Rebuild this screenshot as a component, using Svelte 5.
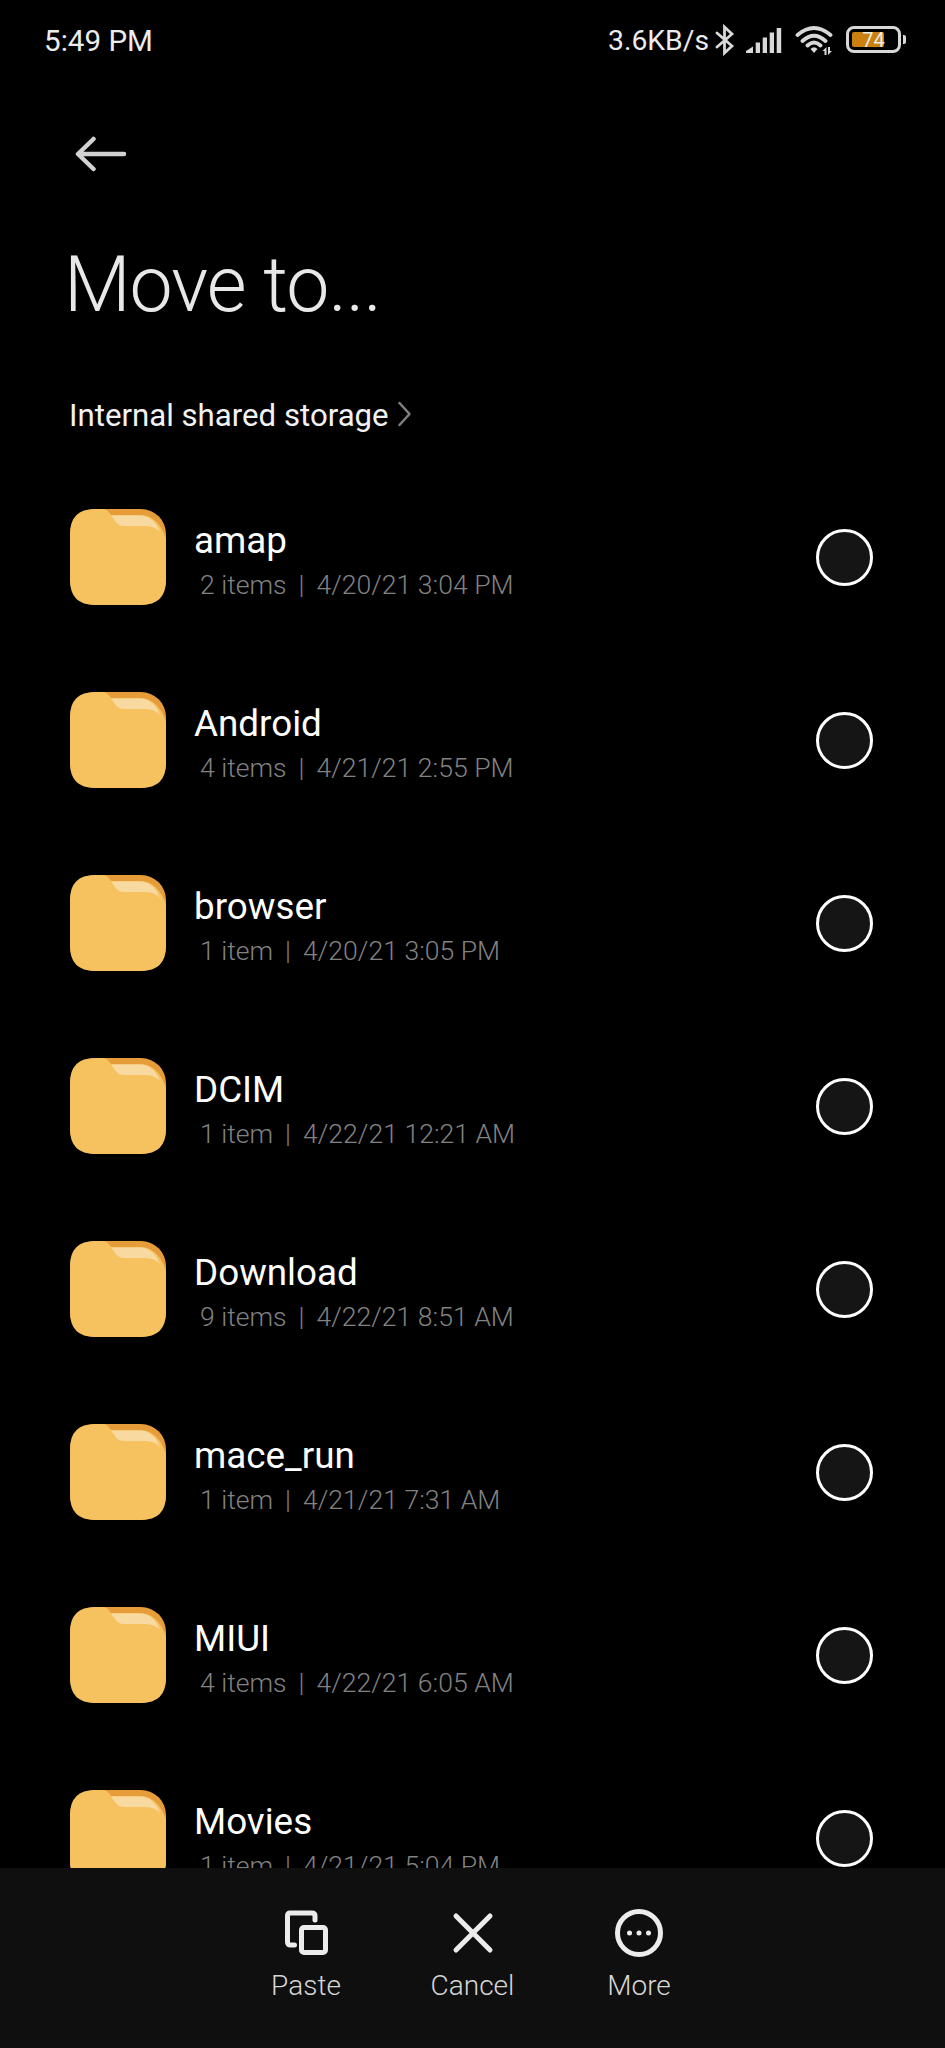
<script lang="ts">
	interface Folder {
		name: string;
		items: number;
		modified: string;
	}

	const folders: Folder[] = [
		{ name: 'amap', items: 2, modified: '4/20/21 3:04 PM' },
		{ name: 'Android', items: 4, modified: '4/21/21 2:55 PM' },
		{ name: 'browser', items: 1, modified: '4/20/21 3:05 PM' },
		{ name: 'DCIM', items: 1, modified: '4/22/21 12:21 AM' },
		{ name: 'Download', items: 9, modified: '4/22/21 8:51 AM' },
		{ name: 'mace_run', items: 1, modified: '4/21/21 7:31 AM' },
		{ name: 'MIUI', items: 4, modified: '4/22/21 6:05 AM' },
		{ name: 'Movies', items: 1, modified: '4/21/21 5:04 PM' }
	];

	let selected = $state<string | null>(null);
</script>

<div class="screen">
	<header class="status-bar">
		<span class="clock">5:49 PM</span>
		<div class="status-icons">
			<span class="speed">3.6KB/s</span>
			<svg class="bluetooth" width="20" height="32" viewBox="0 0 20 32">
				<path d="M2 9 17 22 9.5 29V3L17 10 2 23" />
			</svg>
			<svg class="signal" width="36" height="26" viewBox="0 0 36 26">
				<path d="M0 26V24L7 19.5V26ZM9.7 15.5H14V26H9.7ZM16.7 10.5H21V26H16.7ZM23.7 5.5H28V26H23.7ZM30.7 1H35.2V26H30.7Z" />
			</svg>
			<svg class="wifi" width="38" height="32" viewBox="0 0 38 32">
				<path d="M2.5 10Q19-4 35.5 10M7.5 16Q19 5.5 30.5 16M12.5 20.5Q19 14.5 25.5 20.5" />
				<path class="solid" d="M15.5 24Q19 20.5 22.5 24L19 28ZM31.5 22V30H29.5V26H27.5ZM33 30V22H35V26H37Z" />
			</svg>
			<div class="battery">
				<div class="cell"><div class="charge"></div><span class="percent">74</span></div>
				<div class="nub"></div>
			</div>
		</div>
	</header>

	<button class="back" aria-label="Back">
		<svg width="52" height="36" viewBox="0 0 52 36">
			<path d="M18.5 3 3 18 18.5 33M4 18H49" />
		</svg>
	</button>

	<h1>Move to...</h1>

	<nav class="breadcrumb">
		<span>Internal shared storage</span>
		<svg width="13" height="26" viewBox="0 0 13 26">
			<path d="M1.5 2 11.5 13 1.5 24" />
		</svg>
	</nav>

	<main class="folders">
		{#each folders as folder (folder.name)}
			<button class="row" onclick={() => (selected = folder.name)}>
				<svg class="folder-icon" width="96" height="96" viewBox="0 0 96 96">
					<rect width="96" height="96" rx="25" fill="#e69c38" />
					<path d="M25 0H34Q38 1 41 6H72Q89 8 96 30V71Q96 96 71 96H25Q0 96 0 71V25Q0 0 25 0Z" fill="#f6c15f" />
					<path d="M41 6.5H70Q84 7 90 23Q85 17 75 17H54Q48 17 45 12Z" fill="#f8d9a0" />
				</svg>
				<span class="info">
					<span class="name">{folder.name}</span>
					<span class="meta">
						<span>{folder.items} {folder.items === 1 ? 'item' : 'items'}</span>
						<span>|</span>
						<span>{folder.modified}</span>
					</span>
				</span>
				<span class="radio" class:checked={selected === folder.name}></span>
			</button>
		{/each}
	</main>

	<footer class="actions">
		<button class="action">
			<svg width="50" height="50" viewBox="0 0 50 50">
				<path d="M13.5 37H10Q6.5 37 6.5 34V8Q6.5 5 9 5H31Q34 5 34 8V12" />
				<rect x="20.5" y="19.5" width="24" height="25" rx="2.5" />
			</svg>
			<span>Paste</span>
		</button>
		<button class="action">
			<svg width="50" height="50" viewBox="0 0 50 50">
				<path d="M8 8 42 42M42 8 8 42" />
			</svg>
			<span>Cancel</span>
		</button>
		<button class="action">
			<svg width="50" height="50" viewBox="0 0 50 50">
				<circle cx="25" cy="25" r="21.5" />
				<path d="M15.5 25H15.51M25 25H25.01M34.5 25H34.51" />
			</svg>
			<span>More</span>
		</button>
	</footer>
</div>

<style>
	:global(body) {
		margin: 0;
		background: #000;
	}
	.screen {
		display: flex;
		flex-direction: column;
		width: 945px;
		height: 2048px;
		overflow: hidden;
		background: #000;
		color: #fff;
		font-family: Roboto, sans-serif;
	}
	button {
		padding: 0;
		border: 0;
		background: none;
		color: inherit;
		font: inherit;
		text-align: left;
	}
	svg {
		display: block;
		flex: none;
		fill: none;
		stroke-linecap: round;
		stroke-linejoin: round;
	}

	.status-bar {
		display: flex;
		flex: none;
		justify-content: space-between;
		height: 82px;
		padding: 0 39px 0 44px;
		box-sizing: border-box;
		font-size: 29.6px;
		line-height: 82px;
		color: #ececec;
	}
	.status-icons {
		display: flex;
		align-items: center;
	}
	.speed {
		font-size: 28.3px;
	}
	.bluetooth {
		margin: 0 11px 3px 6px;
		stroke: #d8d8d8;
		stroke-width: 2.8;
		stroke-linejoin: miter;
	}
	.signal {
		margin: 0 13px 3px 0;
		fill: #d8d8d8;
	}
	.wifi {
		margin-right: 13px;
		stroke: #d8d8d8;
		stroke-width: 3.8;
	}
	.wifi .solid {
		fill: #d8d8d8;
		stroke: none;
	}
	.battery {
		display: flex;
		align-items: center;
		gap: 2px;
		margin-bottom: 3px;
	}
	.cell {
		position: relative;
		width: 55px;
		height: 27px;
		padding: 3px;
		box-sizing: border-box;
		border: 3px solid #d8d8d8;
		border-radius: 8px;
	}
	.charge {
		width: 32px;
		height: 15px;
		border-radius: 2px;
		background: #c9800f;
	}
	.percent {
		position: absolute;
		inset: 0;
		font-size: 20px;
		line-height: 22px;
		text-align: center;
	}
	.nub {
		width: 3px;
		height: 9px;
		border-radius: 0 2px 2px 0;
		background: #d8d8d8;
	}

	.back {
		flex: none;
		align-self: flex-start;
		margin: 54px 0 0 75px;
	}
	.back svg {
		stroke: #d2d2d2;
		stroke-width: 4.5;
	}
	h1 {
		flex: none;
		margin: 67px 0 0 64px;
		font-size: 77px;
		font-weight: 300;
		line-height: 92px;
		letter-spacing: -1px;
		color: #e8e8e8;
	}
	.breadcrumb {
		display: flex;
		flex: none;
		align-items: center;
		gap: 9px;
		margin: 65px 0 0 69px;
		font-size: 31.2px;
		line-height: 40px;
		color: #f2f2f2;
	}
	.breadcrumb svg {
		margin-bottom: 4px;
		stroke: #808080;
		stroke-width: 2.5;
	}

	.folders {
		flex: 1;
		min-height: 0;
		margin-top: 29.5px;
		overflow: hidden;
	}
	.row {
		display: flex;
		align-items: center;
		width: 100%;
		height: 183px;
		padding: 0 72px 0 70px;
		box-sizing: border-box;
	}
	.info {
		display: flex;
		flex: 1;
		flex-direction: column;
		gap: 5px;
		margin-left: 28px;
		padding-top: 7px;
	}
	.name {
		font-size: 36.8px;
		line-height: 44px;
	}
	.meta {
		display: flex;
		gap: 12px;
		padding-left: 6px;
		font-size: 26.6px;
		font-weight: 300;
		line-height: 34px;
		color: #828282;
	}
	.radio {
		width: 57px;
		height: 57px;
		box-sizing: border-box;
		border: 3px solid #fff;
		border-radius: 50%;
		background: #151515;
	}
	.radio.checked {
		border-width: 16px;
	}

	.actions {
		display: flex;
		flex: none;
		justify-content: center;
		height: 180px;
		padding-top: 40px;
		box-sizing: border-box;
		background: #0f0f0f;
	}
	.action {
		display: flex;
		flex-direction: column;
		align-items: center;
		gap: 11px;
		width: 166.5px;
		font-size: 28px;
		font-weight: 300;
		line-height: 34px;
		color: #d6d6d6;
	}
	.action svg {
		stroke: #ececec;
		stroke-width: 5;
	}
</style>
